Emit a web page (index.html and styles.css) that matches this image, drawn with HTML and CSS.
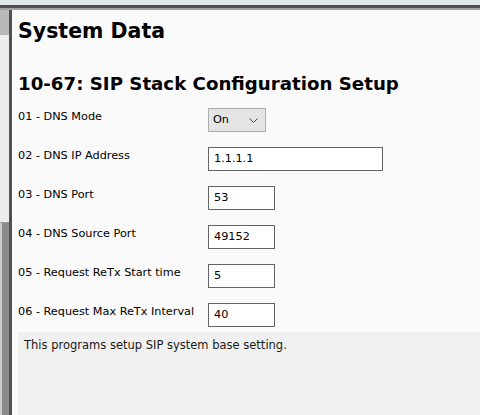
FILE: index.html
```html
<!DOCTYPE html>
<html lang="en">
<head>
  <meta charset="UTF-8">
  <meta name="viewport" content="width=device-width, initial-scale=1.0">
  <title>System Data</title>
  <link rel="stylesheet" href="styles.css">
</head>
<body>
  <div class="top-strip"></div>
  <div class="top-bar"></div>

  <div class="main">
    <div class="side">
      <div class="side-top"></div>
      <div class="side-mid"></div>
      <div class="side-low"></div>
    </div>

    <div class="panel">
      <h1>System Data</h1>
      <h2>10-67: SIP Stack Configuration Setup</h2>

      <div class="form">
        <label class="lbl">01 - DNS Mode</label>
        <div class="field">
          <span class="select-wrap">
            <select class="sel">
              <option>On</option>
              <option>Off</option>
            </select>
            <svg class="chev" width="9" height="5" viewBox="0 0 9 5"><path d="M0.5 0.5 L4.5 4.5 L8.5 0.5" fill="none" stroke="#444" stroke-width="1"/></svg>
          </span>
        </div>

        <label class="lbl">02 - DNS IP Address</label>
        <div class="field"><input class="inp wide" type="text" value="1.1.1.1"></div>

        <label class="lbl">03 - DNS Port</label>
        <div class="field"><input class="inp" type="text" value="53"></div>

        <label class="lbl">04 - DNS Source Port</label>
        <div class="field"><input class="inp" type="text" value="49152"></div>

        <label class="lbl">05 - Request ReTx Start time</label>
        <div class="field"><input class="inp" type="text" value="5"></div>

        <label class="lbl">06 - Request Max ReTx Interval</label>
        <div class="field"><input class="inp" type="text" value="40"></div>
      </div>

      <div class="desc">This programs setup SIP system base setting.</div>
    </div>
  </div>
</body>
</html>
```

FILE: styles.css
```css
/* base */
* { margin:0; padding:0; box-sizing:border-box; }
html, body { height:100%; }
body { font-family:"DejaVu Sans", Verdana, sans-serif; color:#000; background:#fafafa; overflow:hidden; }

/* window chrome at the top */
.top-strip { height:5px; background:#e0e7e7; }
.top-bar { height:5px; background:#4e4e4e; border-bottom:2px solid #a2a2a2; }

.main { display:flex; height:calc(100vh - 10px); }

/* left frame */
.side { width:12px; display:flex; flex-direction:column; border-right:3px solid #525252; }
.side-top { height:25px; background:#b8b8b8; }
.side-mid { height:188px; background:#ececec; border-bottom:1px solid #9a9a9a; }
.side-low { flex:1; background:#8a8a8a; border-left:2px solid #cdcdcd; }

/* page */
.panel { flex:1; display:flex; flex-direction:column; background:#fafafa; padding-left:6px; }
h1 { font-size:20.5px; line-height:24px; font-weight:bold; margin-top:9px; }
h2 { font-size:18.2px; line-height:22px; font-weight:bold; margin-top:30px; }

/* settings rows */
.form { display:grid; grid-template-columns:190px 1fr; row-gap:15px; margin-top:13px; }
.lbl { font-size:11.25px; line-height:14px; padding-top:2px; }
.field { height:24px; display:flex; }
.inp {
  height:24px; width:67px; border:1px solid #646464; background:#fff;
  font-family:"DejaVu Sans", Verdana, sans-serif; font-size:11.25px; color:#000;
  padding:0 5px 1px; outline:none;
}
.inp.wide { width:175px; }

.select-wrap { position:relative; display:inline-block; }
.sel {
  appearance:none; -webkit-appearance:none; height:24px; width:58px;
  border:1px solid #adadad; background:#e5e5e5; border-radius:0;
  font-family:"DejaVu Sans", Verdana, sans-serif; font-size:11.25px; color:#000;
  padding:0 4px 1px; outline:none;
}
.chev { position:absolute; right:8px; top:10px; pointer-events:none; }

/* description */
.desc {
  flex:1; margin-top:5px; background:#f0f0f0; color:#1a1a1a;
  font-size:11.5px; line-height:14px; padding:6px 6px 0;
}
```
